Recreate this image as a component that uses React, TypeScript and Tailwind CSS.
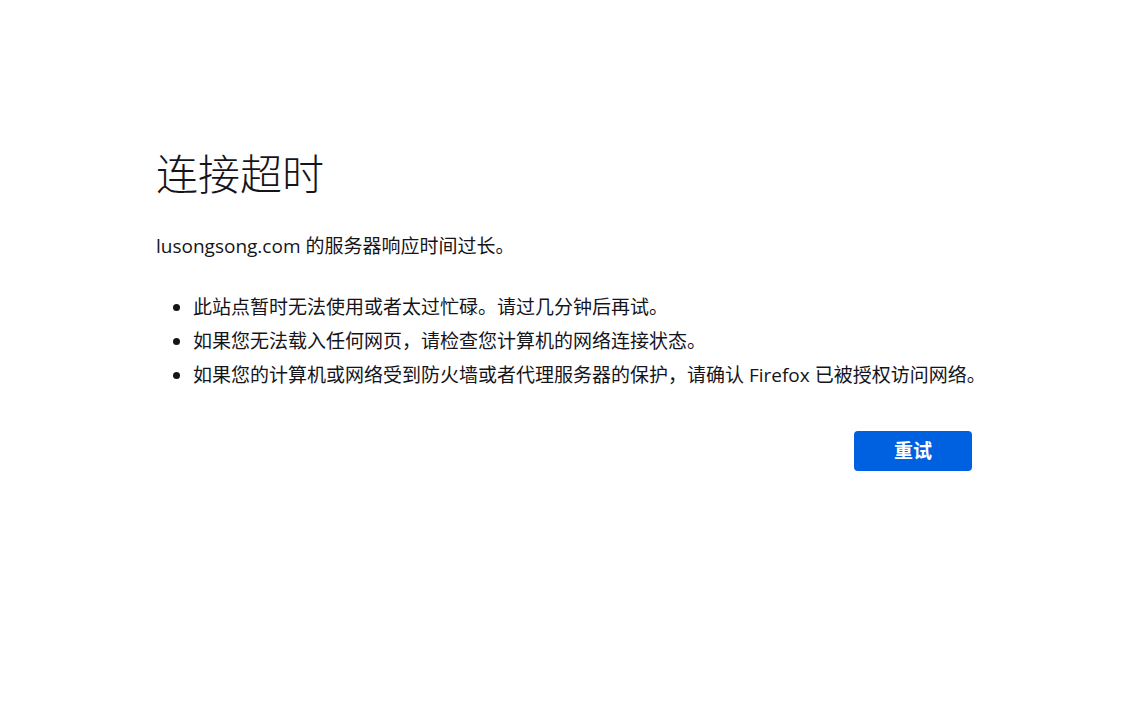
import React from 'react';

const font = { fontFamily: '"Open Sans", "Noto Sans CJK SC", sans-serif' };

export default function App() {
  return (
    <div className="min-h-[720px] w-full bg-white text-[#15141a]" style={font}>
      <div className="ml-[156px] w-[816px] pt-[144px]">
        <h1 className="text-[42px] font-light leading-[60px]">连接超时</h1>
        <p className="mt-[28px] text-[19px] leading-[28px]">lusongsong.com 的服务器响应时间过长。</p>
        <ul className="mt-[33px] list-disc pl-[37px] text-[19px] leading-[28px] whitespace-nowrap">
          <li className="mb-[6px]">此站点暂时无法使用或者太过忙碌。请过几分钟后再试。</li>
          <li className="mb-[6px]">如果您无法载入任何网页，请检查您计算机的网络连接状态。</li>
          <li>如果您的计算机或网络受到防火墙或者代理服务器的保护，请确认 Firefox 已被授权访问网络。</li>
        </ul>
        <div className="mt-[42px] flex justify-end">
          <button className="h-[40px] w-[118px] rounded-[4px] bg-[#0061e0] text-[19px] font-bold text-white">
            重试
          </button>
        </div>
      </div>
    </div>
  );
}
